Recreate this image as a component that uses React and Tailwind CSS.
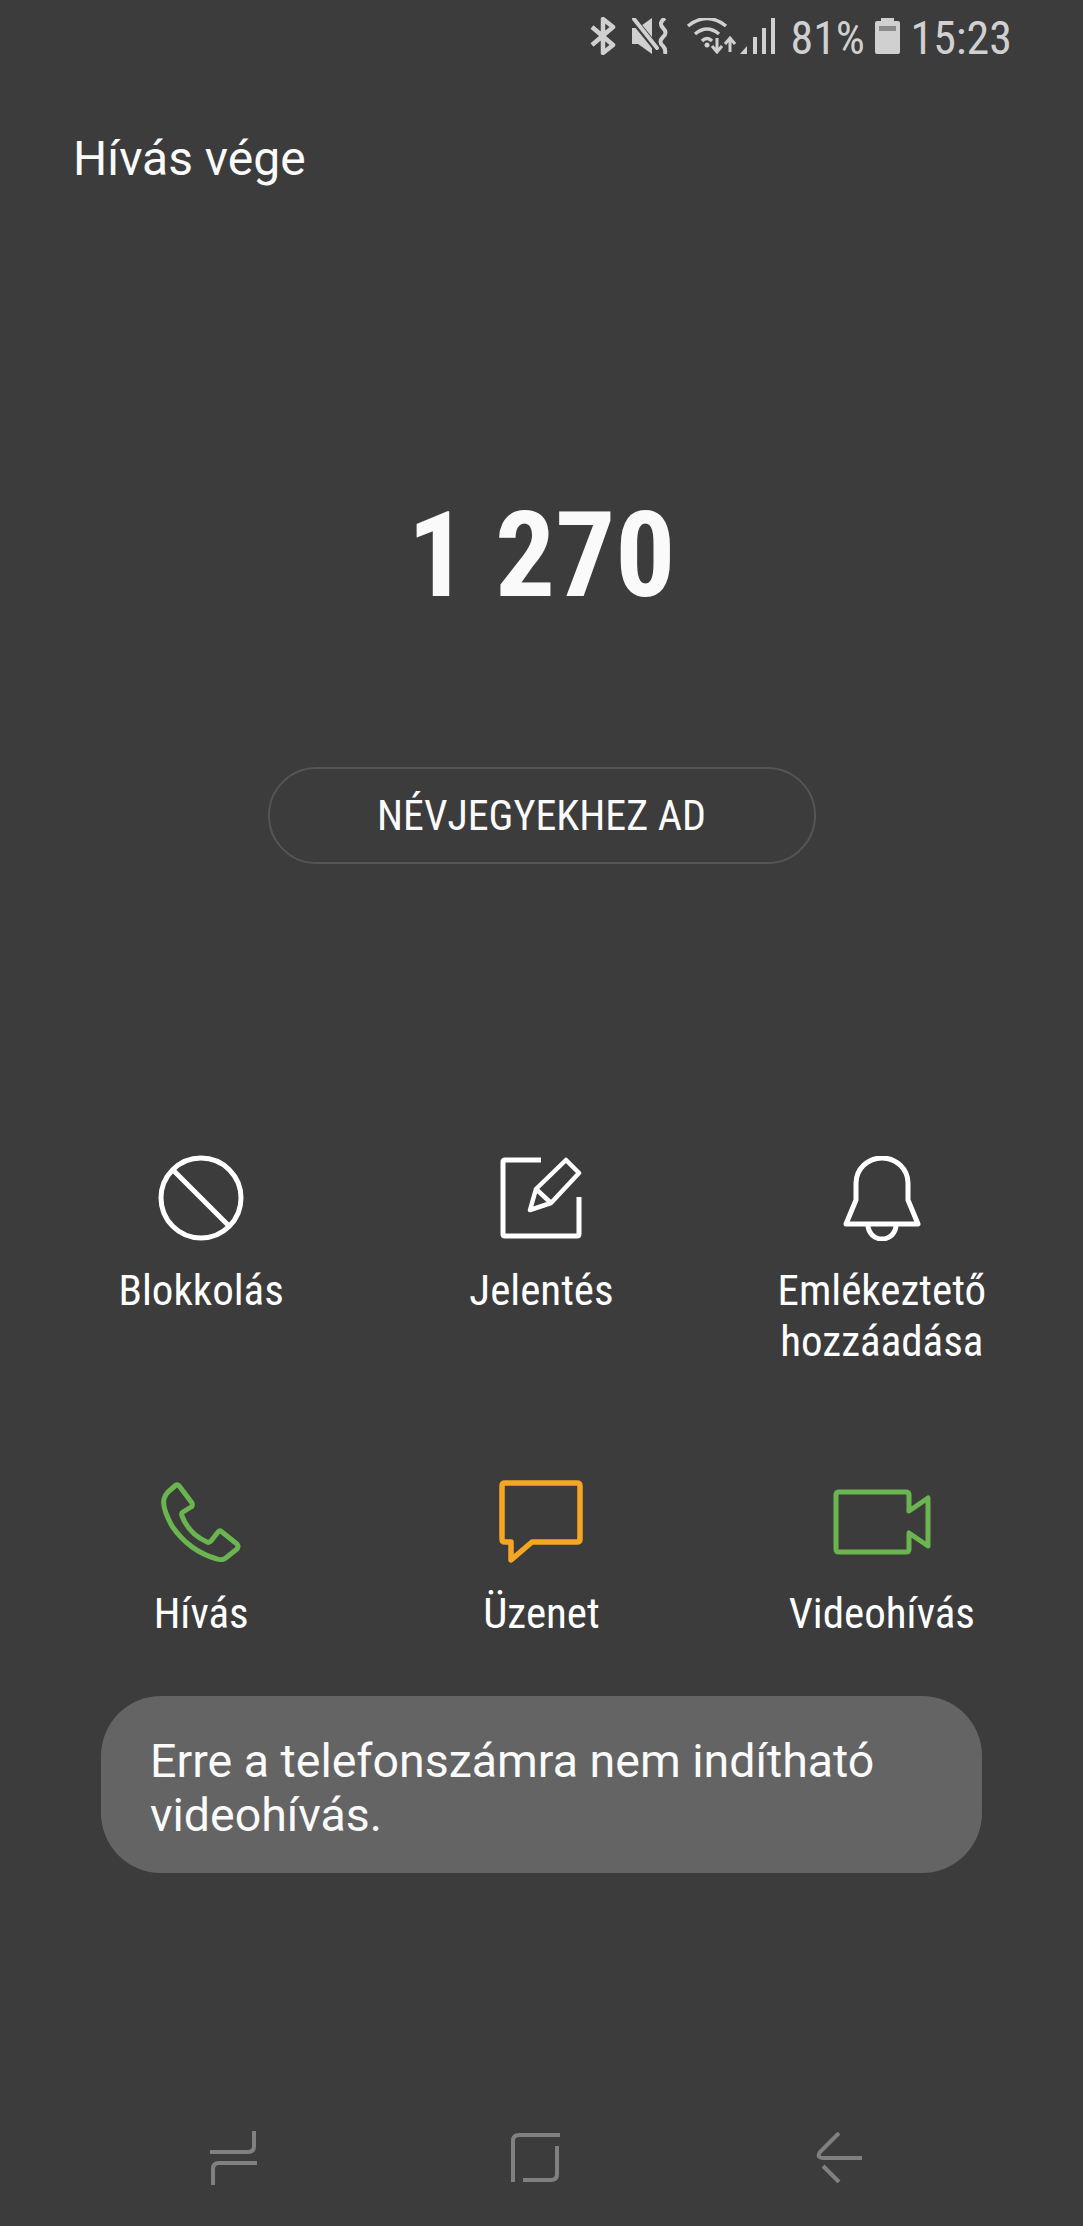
const condensed = "font-['Roboto',sans-serif] [font-stretch:75%]";

function StatusIcons() {
  return (
    <div className="flex items-start justify-end h-[72px] pt-[18px] pr-[71px] text-[#d0d0d0]">
      <svg width="26" height="38" viewBox="0 0 26 38" fill="none" stroke="currentColor" strokeWidth="4.5" className="mr-[16px] -mt-px">
        <path d="M2 10 L23 28 L13 36 V2 L23 10 L2 28" strokeLinejoin="round" />
      </svg>
      <svg width="38" height="36" viewBox="0 0 38 36" className="mr-[16px]">
        <path d="M0 10 H6 L20 0 V36 L6 26 H0 Z" fill="currentColor" />
        <path d="M0 0 L26 32" stroke="#3c3c3c" strokeWidth="7" />
        <path d="M2 1 L25 30" stroke="currentColor" strokeWidth="4" strokeLinecap="round" />
        <path d="M33 0 Q26 5 31 10 Q36 15 31 19 Q26 24 31 28 Q34 31 33 36" fill="none" stroke="currentColor" strokeWidth="4" />
      </svg>
      <svg width="50" height="36" viewBox="0 0 50 36" fill="none" stroke="currentColor" className="mr-[4px]">
        <path d="M2 8 Q21 -7 40 8" strokeWidth="3.5" />
        <path d="M9 16 Q21 6 33 16" strokeWidth="3.5" />
        <path d="M16 23 Q21 18 26 23" strokeWidth="3.5" />
        <circle cx="21" cy="27" r="2.5" fill="currentColor" stroke="none" />
        <path d="M31 20 V33 M26 28 L31 34 L36 28" strokeWidth="3" />
        <path d="M44 34 V21 M39 26 L44 20 L49 26" strokeWidth="3" />
      </svg>
      <svg width="36" height="36" viewBox="0 0 36 36" fill="currentColor" className="mr-[14px]">
        <path d="M0 36 H7 V28 Z" />
        <rect x="13" y="19" width="4" height="17" />
        <rect x="22" y="10" width="4" height="26" />
        <rect x="31" y="0" width="4" height="36" />
      </svg>
      <span className={`${condensed} text-[46px] leading-[40px] mr-[13px] w-[72px] whitespace-nowrap`}>81%</span>
      <svg width="25" height="36" viewBox="0 0 25 36" className="mr-[10px]">
        <path d="M6 0 H19 V3 H23 Q25 3 25 5 V34 Q25 36 23 36 H2 Q0 36 0 34 V5 Q0 3 2 3 H6 Z" fill="currentColor" />
        <rect x="4" y="8" width="17" height="5" fill="#8a8a8a" />
      </svg>
      <span className={`${condensed} text-[46px] leading-[40px] whitespace-nowrap`}>15:23</span>
    </div>
  );
}

function Action({ icon, label, labelGap = "mt-[22px]" }) {
  return (
    <div className="flex flex-col items-center">
      <div className="h-[90px] flex items-center justify-center">{icon}</div>
      <div className={`${condensed} ${labelGap} text-[43px] leading-[51px] text-white text-center whitespace-pre-line`}>{label}</div>
    </div>
  );
}

const blockIcon = (
  <svg width="86" height="86" viewBox="0 0 86 86" fill="none" stroke="#fff" strokeWidth="5">
    <circle cx="43" cy="43" r="40" />
    <path d="M15 15 L71 71" />
  </svg>
);

const noteIcon = (
  <svg width="82" height="82" viewBox="0 0 82 82" fill="none" stroke="#fff" strokeWidth="5" strokeLinejoin="round">
    <path d="M41 3 H5 Q3 3 3 5 V77 Q3 79 5 79 H77 Q79 79 79 77 V40" />
    <path d="M30 53 L36 32 L66 3 L79 16 L51 46 Z M36 32 L51 46" strokeWidth="4.5" />
  </svg>
);

const bellIcon = (
  <svg width="78" height="85" viewBox="0 0 78 85" fill="none" stroke="#fff" strokeWidth="5" strokeLinejoin="round">
    <path d="M3 68 L13 44 V27 A26 25 0 0 1 65 27 V44 L75 68 Z" />
    <path d="M25 69 A14 14 0 0 0 53 69" />
  </svg>
);

const phoneIcon = (
  <svg width="80" height="80" viewBox="0 0 80 80" fill="none" stroke="#6ab550" strokeWidth="5" strokeLinejoin="round">
    <path d="M15 3 Q17 2 19 5 L31 21 Q32 24 30 25 L22 30 Q20 31 21 34 Q28 52 46 60 Q48 61 50 59 L57 50 Q59 48 61 50 L76 62 Q78 64 76 67 L66 75 Q62 79 56 77 Q28 69 11 44 Q1 26 3 17 Q4 13 7 10 Z" />
  </svg>
);

const messageIcon = (
  <svg width="84" height="84" viewBox="0 0 84 84" fill="none" stroke="#f5a623" strokeWidth="5.5" strokeLinejoin="round">
    <path d="M6 3 H78 Q81 3 81 6 V59 Q81 62 78 62 H33 L12 80 V62 H6 Q3 62 3 59 V6 Q3 3 6 3 Z" />
  </svg>
);

const videoIcon = (
  <svg width="98" height="66" viewBox="0 0 98 66" fill="none" stroke="#6ab550" strokeWidth="5" strokeLinejoin="round">
    <path d="M6 3 H73 Q76 3 76 6 V22 L95 9 V57 L76 44 V60 Q76 63 73 63 H6 Q3 63 3 60 V6 Q3 3 6 3 Z" />
  </svg>
);

export default function App() {
  return (
    <div className="w-[1083px] h-[2226px] bg-[#3c3c3c] flex flex-col overflow-hidden font-['Roboto',sans-serif]">
      <StatusIcons />

      <div className="pl-[73px] mt-[57px] text-[48px] leading-[60px] text-[#fafafa]">Hívás vége</div>

      <div className={`${condensed} mt-[302px] text-center text-[119px] leading-[130px] font-bold text-[#fafafa]`}>1 270</div>

      <button className={`${condensed} mt-[146px] mx-auto w-[548px] h-[97px] rounded-full border-2 border-[#555] text-[42px] text-[#fafafa]`}>
        NÉVJEGYEKHEZ AD
      </button>

      <div className="mt-[289px] px-[31px] grid grid-cols-3">
        <Action icon={blockIcon} label="Blokkolás" />
        <Action icon={noteIcon} label="Jelentés" />
        <Action icon={bellIcon} label={"Emlékeztető\nhozzáadása"} />
      </div>

      <div className="mt-[110px] px-[31px] grid grid-cols-3">
        <Action icon={phoneIcon} label="Hívás" labelGap="mt-[21px]" />
        <Action icon={messageIcon} label="Üzenet" labelGap="mt-[21px]" />
        <Action icon={videoIcon} label="Videohívás" labelGap="mt-[21px]" />
      </div>

      <div className="mt-[57px] mx-[101px] h-[177px] rounded-[60px] bg-[#646464] pl-[49px] pt-[38px] text-[46.5px] leading-[54px] text-[#fafafa]">
        Erre a telefonszámra nem indítható<br />videohívás.
      </div>

      <div className="mt-auto h-[95px] relative flex items-start text-[#808080]">
        <svg width="47" height="54" viewBox="0 0 47 54" fill="none" stroke="currentColor" strokeWidth="4" className="ml-[210px]">
          <path d="M44 0 V15 Q44 21 38 21 H0" />
          <path d="M47 32 H9 Q3 32 3 38 V54" />
        </svg>
        <svg width="49" height="49" viewBox="0 0 49 49" fill="none" stroke="currentColor" strokeWidth="4" className="ml-[254px] mt-[2px]">
          <path d="M49 2 H8 Q2 2 2 8 V49" />
          <path d="M46 13 V41 Q46 47 40 47 H12" />
        </svg>
        <svg width="46" height="51" viewBox="0 0 46 51" fill="none" stroke="currentColor" strokeWidth="4" className="ml-[256px] mt-[1px]">
          <path d="M23 1 L4 20 Q0 26 8 26 H46" />
          <path d="M7 34 L23 50" />
        </svg>
      </div>
    </div>
  );
}
